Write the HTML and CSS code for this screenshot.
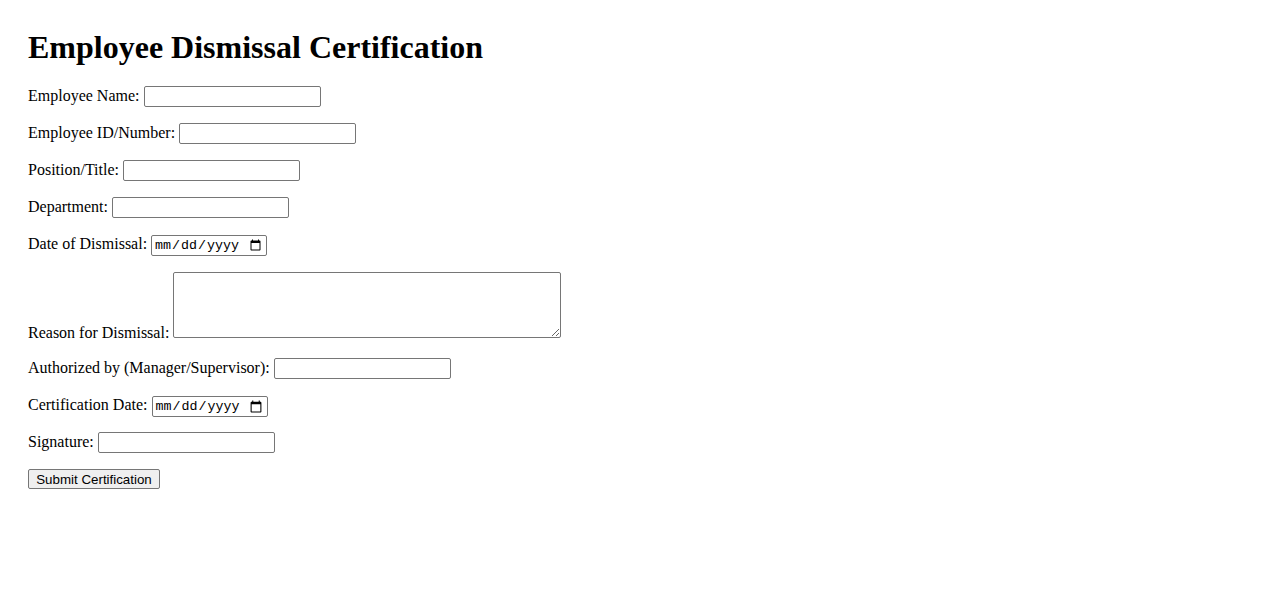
FILE: index.html
```html
<!DOCTYPE html>
<html>
<head>
<meta charset="utf-8">
<title>Employee Dismissal Certification</title>
<link rel="stylesheet" href="styles.css">
</head>
<body>
<div class="page">
  <h1 class="title">Employee Dismissal Certification</h1>
  <form class="form">
    <div class="row"><label>Employee Name:</label> <input type="text" class="text"></div>
    <div class="row"><label>Employee ID/Number:</label> <input type="text" class="text"></div>
    <div class="row"><label>Position/Title:</label> <input type="text" class="text"></div>
    <div class="row row-loose"><label>Department:</label> <input type="text" class="text"></div>
    <div class="row"><label>Date of Dismissal:</label> <input type="date" class="date"></div>
    <div class="row"><label>Reason for Dismissal:</label> <textarea class="area"></textarea></div>
    <div class="row row-loose"><label>Authorized by (Manager/Supervisor):</label> <input type="text" class="text"></div>
    <div class="row row-tight"><label>Certification Date:</label> <input type="date" class="date"></div>
    <div class="row"><label>Signature:</label> <input type="text" class="text"></div>
    <div class="row"><button type="button" class="submit">Submit Certification</button></div>
  </form>
</div>
</body>
</html>
```

FILE: styles.css
```css
html, body {
  margin: 0;
  padding: 0;
  background: #fff;
}
body {
  font-family: "Liberation Serif", "Times New Roman", serif;
  font-size: 16px;
  color: #000;
}
.page {
  padding: 29px 28px;
}
.title {
  font-size: 32px;
  font-weight: bold;
  margin: 0 0 20px 0;
}
.row {
  margin-bottom: 16px;
}
.row-loose {
  margin-bottom: 17px;
}
.row-tight {
  margin-bottom: 15px;
}
.text {
  box-sizing: border-box;
  width: 177px;
  height: 21px;
  border: 1px solid #767676;
  border-radius: 2px;
  padding: 1px 2px;
  font-family: "Liberation Sans", Arial, sans-serif;
  font-size: 13.33px;
  vertical-align: baseline;
}
.date {
  box-sizing: border-box;
  width: 116px;
  height: 21px;
  border: 1px solid #767676;
  border-radius: 2px;
  padding: 1px 2px;
  font-family: "Liberation Mono", "Courier New", monospace;
  font-size: 13.33px;
}
.area {
  box-sizing: border-box;
  width: 388px;
  height: 66px;
  border: 1px solid #767676;
  border-radius: 2px;
  padding: 2px;
  font-family: "Liberation Mono", monospace;
  font-size: 13.33px;
  vertical-align: baseline;
}
.submit {
  box-sizing: border-box;
  width: 132px;
  height: 20px;
  padding: 0 6px;
  border: 1px solid #767676;
  border-radius: 2px;
  background: #efefef;
  font-family: "Liberation Sans", Arial, sans-serif;
  font-size: 13.33px;
  color: #000;
}
```
